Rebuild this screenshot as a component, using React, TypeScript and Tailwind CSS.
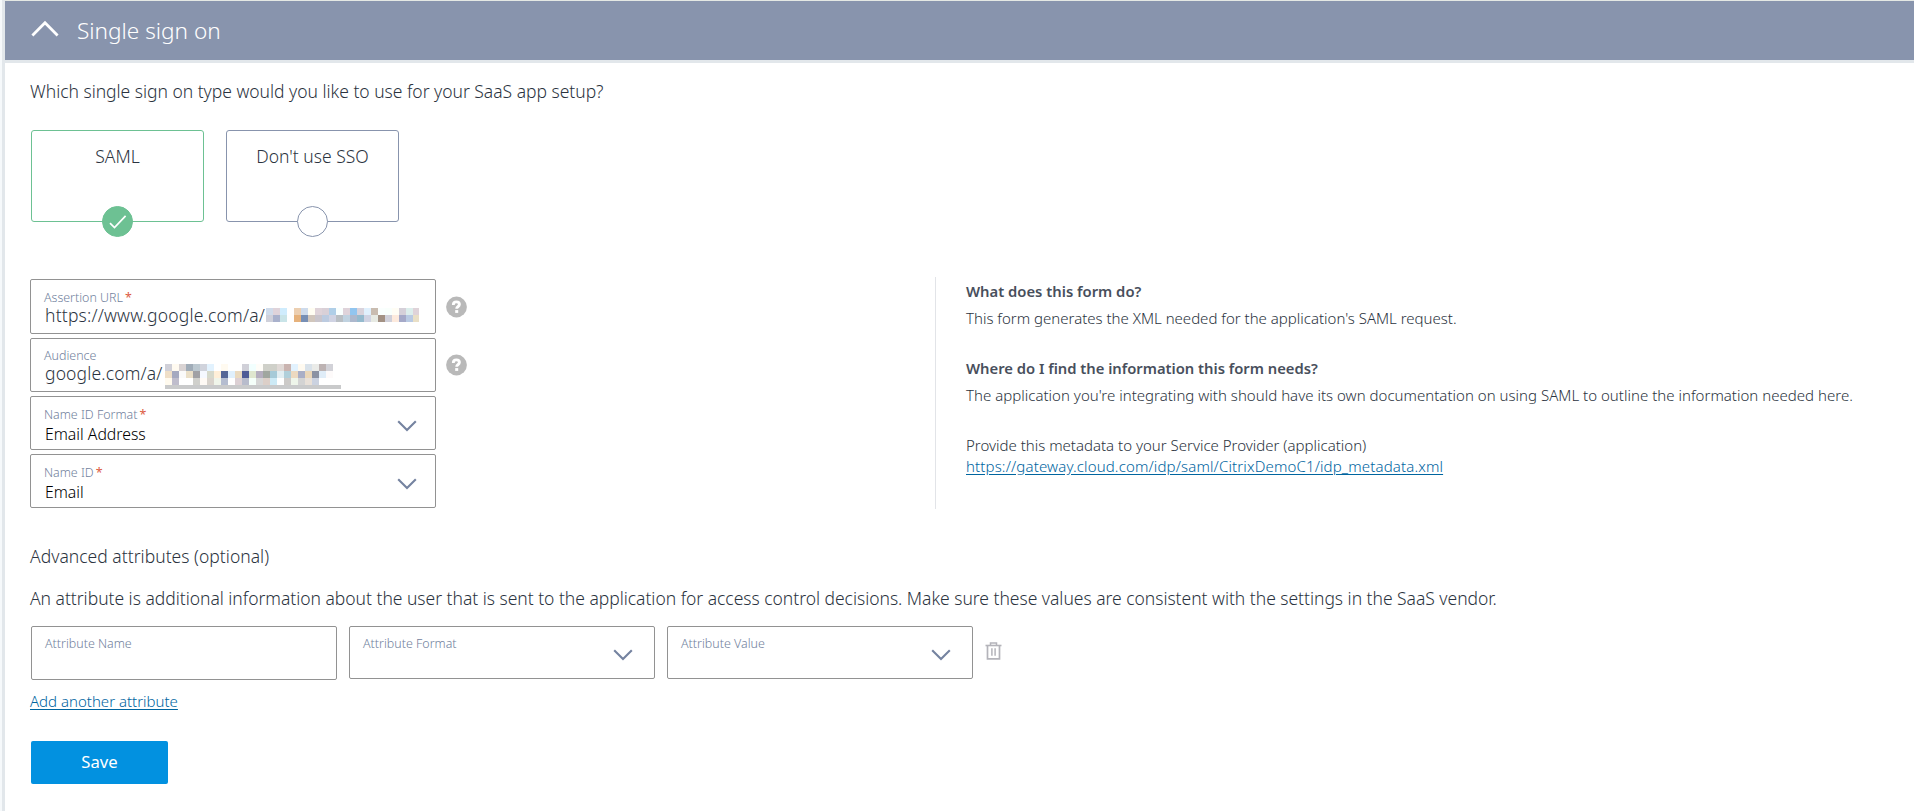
import type { ReactNode } from "react";

const ASSERTION_MASK: string[][] = [
  ["#d0dbea", "#dfd3da", "#cfecfd", "", "#eccfb1", "#cedbec", "#fffdf2", "#dfd3d9", "#d9d0d7", "#b0cfe8", "#f9fffe", "#dfd3da", "#92c5ef", "#d9d3dc", "#e0f0fd", "#c9bcb0", "#fafffe", "#f9fffc", "#fffdf5", "#d5d0d9", "#dceeec", "#dfd3d9"],
  ["#cfd0da", "#a9b1cc", "#c9e4e8", "", "#e6b27c", "#778fb5", "#d1c6bc", "#c9c5cc", "#bccbe0", "#d0d3e3", "#b9bfc4", "#c0d2e0", "#adb8cd", "#95bace", "#d0d3e3", "#e7eae3", "#a39184", "#d0d0da", "#fdeadd", "#a5a9c8", "#b9cae3", "#e9dfc6"],
];

const AUDIENCE_MASK: string[][] = [
  ["#d0d0d8", "#fffaf0", "#d9d3d3", "#a0acb8", "#bcc8d0", "#d0d3dc", "#e2f2fe", "", "#fffaf0", "", "", "#d0d0d8", "#f2fffe", "#fffdf8", "#cfd0c9", "#cfd0c9", "#e0d9d6", "#cab4b0", "#e2f2fe", "#fffaf0", "#d9e2ea", "#eaebe8", "#bdb3b3", "#d2d2d8"],
  ["#efdfc8", "#a5a9c0", "#fafafa", "#eadfc8", "#a0a0a4", "#f5f8ff", "#d6d9cc", "#ffefd8", "#566797", "#e0f0fd", "#eadac0", "#4f5b96", "#dfe6cf", "#b5aebf", "#a0a69f", "#a6cad8", "#e2eef2", "#b0cfda", "#ecd9c0", "#a9aec6", "#ead6b8", "#8b92a3", "#e0edf8", "#fdfafa"],
  ["#fffaee", "#bfbdcc", "", "", "#d0d0cc", "#fffaf5", "#d9d3cc", "#f0f5ea", "#b5bdd0", "", "#dcd0d4", "#b8bccc", "#f5fffa", "#d6d6d6", "#dccfc8", "#cdeaf6", "", "#cccac8", "#eef5ea", "#d3d3d3", "#e8e0d8", "#cbd2e0", "", ""],
];

function Mask({ rows, width, className, bar }: { rows: string[][]; width: number; className: string; bar?: boolean }) {
  const height = rows.length * 7 + (bar ? 4 : 0);
  return (
    <svg className={className} width={width} height={height} shapeRendering="crispEdges" aria-hidden="true">
      <rect width={width} height={height} fill="#fff" />
      {rows.map((row, y) =>
        row.map((fill, x) => (fill ? <rect key={`${x}-${y}`} x={x * 7} y={y * 7} width={7} height={7} fill={fill} /> : null)),
      )}
      {bar && <rect y={rows.length * 7} width={width} height={4} fill="#c9cacb" />}
    </svg>
  );
}

function ChevronDown() {
  return (
    <svg width="20" height="12" viewBox="0 0 20 12" fill="none" stroke="#7583a0" strokeWidth="2.1" aria-hidden="true">
      <path d="M1.2 1.2 10 10l8.8-8.8" />
    </svg>
  );
}

function HelpIcon() {
  return (
    <svg width="21" height="22" viewBox="0 0 21 22" aria-hidden="true">
      <circle cx="10.5" cy="11" r="10.4" fill="#b9b9b9" />
      <path d="M7.4 9V8.3c0-1.5 1.3-2.4 3-2.4 1.8 0 3 .9 3 2.4 0 1.3-.8 1.9-1.5 2.4-.8.6-1.2.9-1.2 2" fill="none" stroke="#fff" strokeWidth="2.9" />
      <rect x="9.2" y="14.1" width="3" height="2.8" fill="#fff" />
    </svg>
  );
}

function TrashIcon() {
  return (
    <svg width="17" height="18" viewBox="0 0 17 18" fill="none" stroke="#b4b4ba" aria-hidden="true">
      <path d="M0.5 3.5h16" strokeWidth="1.6" />
      <path d="M5.5 3.2V.9h6v2.3" strokeWidth="1.5" />
      <path d="M2.5 3.5v13.3h12V3.5" strokeWidth="1.7" />
      <path d="M6.9 6.2v7.6M10.1 6.2v7.6" strokeWidth="1.5" />
    </svg>
  );
}

function Field({
  label,
  required,
  className,
  select,
  children,
}: {
  label: string;
  required?: boolean;
  className: string;
  select?: "short" | "filled";
  children?: ReactNode;
}) {
  return (
    <div className={`relative flex justify-between rounded-[2px] border border-[#929292] ${className}`}>
      <div className="flex flex-col">
        <div className="text-[12.45px] leading-4 text-[#71819d]">
          {label}
          {required && <span className="ml-[2px] font-normal text-[#dc5a41]">*</span>}
        </div>
        {children}
      </div>
      {select && (
        <div className={select === "filled" ? "mr-[18px] mt-[13px]" : "mr-[21px] mt-[13px]"}>
          <ChevronDown />
        </div>
      )}
    </div>
  );
}

function TypeCard({ label, selected }: { label: string; selected?: boolean }) {
  return (
    <div
      className={`relative h-[92px] w-[173px] rounded-[3px] border pt-[13px] text-center ${selected ? "border-[#6dc193]" : "border-[#8894ad]"}`}
    >
      <span className="block leading-6">{label}</span>
      <span
        className={`absolute left-[70px] top-[75px] flex size-[31px] items-center justify-center rounded-full border ${selected ? "border-[#6dc193] bg-[#6dc193]" : "border-[#8894ad] bg-white"}`}
      >
        {selected && (
          <svg width="18" height="14" viewBox="0 0 18 14" fill="none" stroke="#fff" strokeWidth="1.7" aria-hidden="true">
            <path d="M1 8.2 5.5 12.6 16.6.9" />
          </svg>
        )}
      </span>
    </div>
  );
}

export default function App() {
  return (
    <div className="flex h-[811px] w-full overflow-hidden bg-white font-['Noto_Sans','Open_Sans',sans-serif] text-[17.5px] font-light text-[#2b3340]">
      <div className="w-[2px] shrink-0 bg-[#f6f9fb]" />
      <div className="w-[3px] shrink-0 bg-[#e2e7eb]" />
      <main className="min-w-0 flex-1 border-t border-[#e4e8e4]">
        <header className="flex h-[62px] items-start border-b-[3px] border-[#e2e7eb] bg-[#8894ad] text-white">
          <svg className="ml-[26px] mt-[19px]" width="28" height="17" viewBox="0 0 28 17" fill="none" stroke="#fff" strokeWidth="2.8" aria-hidden="true">
            <path d="M1.4 15.4 14 2.8l12.6 12.6" />
          </svg>
          <h1 className="ml-[18px] mt-4 text-[22.6px] font-light leading-7">Single sign on</h1>
        </header>

        <div className="pl-[25px] pt-4">
          <p className="leading-6 tracking-[-0.02px]">Which single sign on type would you like to use for your SaaS app setup?</p>

          <div className="ml-px mt-[27px] flex gap-[22px]">
            <TypeCard label="SAML" selected />
            <TypeCard label="Don't use SSO" />
          </div>

          <div className="mt-[55px] flex h-[232px]">
            <div className="flex w-[905px] flex-col gap-1 pt-[2px]">
              <div className="flex items-center gap-[10px]">
                <Field label="Assertion URL" required className="h-[55px] w-[406px] pl-[13px] pt-[10px]">
                  <div className="-mt-px pl-px leading-5 tracking-[0.2px]">https://www.google.com/a/</div>
                  <Mask rows={ASSERTION_MASK} width={153} className="absolute left-[235px] top-[28px]" />
                </Field>
                <HelpIcon />
              </div>
              <div className="flex items-center gap-[10px]">
                <Field label="Audience" className="h-[54px] w-[406px] pl-[13px] pt-[9px]">
                  <div className="-mt-px pl-px leading-5 tracking-[0.15px]">google.com/a/</div>
                  <Mask rows={AUDIENCE_MASK} width={176} bar className="absolute left-[134px] top-[25px]" />
                </Field>
                <HelpIcon />
              </div>
              <Field label="Name ID Format" required select="filled" className="h-[54px] w-[406px] pl-[13px] pt-[10px]">
                <div className="mt-px pl-px text-[15.8px] leading-5 text-black">Email Address</div>
              </Field>
              <Field label="Name ID" required select="filled" className="h-[54px] w-[406px] pl-[13px] pt-[10px]">
                <div className="mt-px pl-px text-[15.8px] leading-5 text-black">Email</div>
              </Field>
            </div>

            <aside className="flex-1 border-l border-[#e2e4e8] pl-[30px] pt-1 text-[15px] leading-5">
              <h2 className="text-[14.8px] font-semibold leading-5 text-[#484f5c]">What does this form do?</h2>
              <p className="mt-[7px]">This form generates the XML needed for the application's SAML request.</p>
              <h2 className="mt-[30px] text-[14.8px] font-semibold leading-5 tracking-[-0.02px] text-[#484f5c]">
                Where do I find the information this form needs?
              </h2>
              <p className="mt-[7px] tracking-[0.02px]">
                The application you're integrating with should have its own documentation on using SAML to outline the
                information needed here.
              </p>
              <p className="mt-[30px]">Provide this metadata to your Service Provider (application)</p>
              <a href="#metadata" className="mt-px block tracking-[0.14px] text-[#00659f] underline underline-offset-2">
                https://gateway.cloud.com/idp/saml/CitrixDemoC1/idp_metadata.xml
              </a>
            </aside>
          </div>

          <h3 className="mt-[35px] font-light leading-6 tracking-[0.02px]">Advanced attributes (optional)</h3>
          <p className="mt-[18px] leading-6 tracking-[-0.025px]">
            An attribute is additional information about the user that is sent to the application for access control
            decisions. Make sure these values are consistent with the settings in the SaaS vendor.
          </p>

          <div className="ml-px mt-4 flex h-[54px] items-start gap-3">
            <Field label="Attribute Name" className="h-[54px] w-[306px] pl-[13px] pt-[9px]" />
            <Field label="Attribute Format" select="short" className="h-[53px] w-[306px] pl-[13px] pt-[9px]" />
            <Field label="Attribute Value" select="short" className="h-[53px] w-[306px] pl-[13px] pt-[9px]" />
            <button type="button" aria-label="Delete attribute" className="mt-4">
              <TrashIcon />
            </button>
          </div>

          <a href="#add" className="mt-[11px] block w-fit text-[15px] leading-5 text-[#00659f] underline underline-offset-2">
            Add another attribute
          </a>
          <button type="button" className="ml-px mt-[30px] block h-[43px] w-[137px] rounded-[2px] bg-[#0291e0] pb-px text-[16.7px] font-normal text-white">
            Save
          </button>
        </div>
      </main>
    </div>
  );
}
